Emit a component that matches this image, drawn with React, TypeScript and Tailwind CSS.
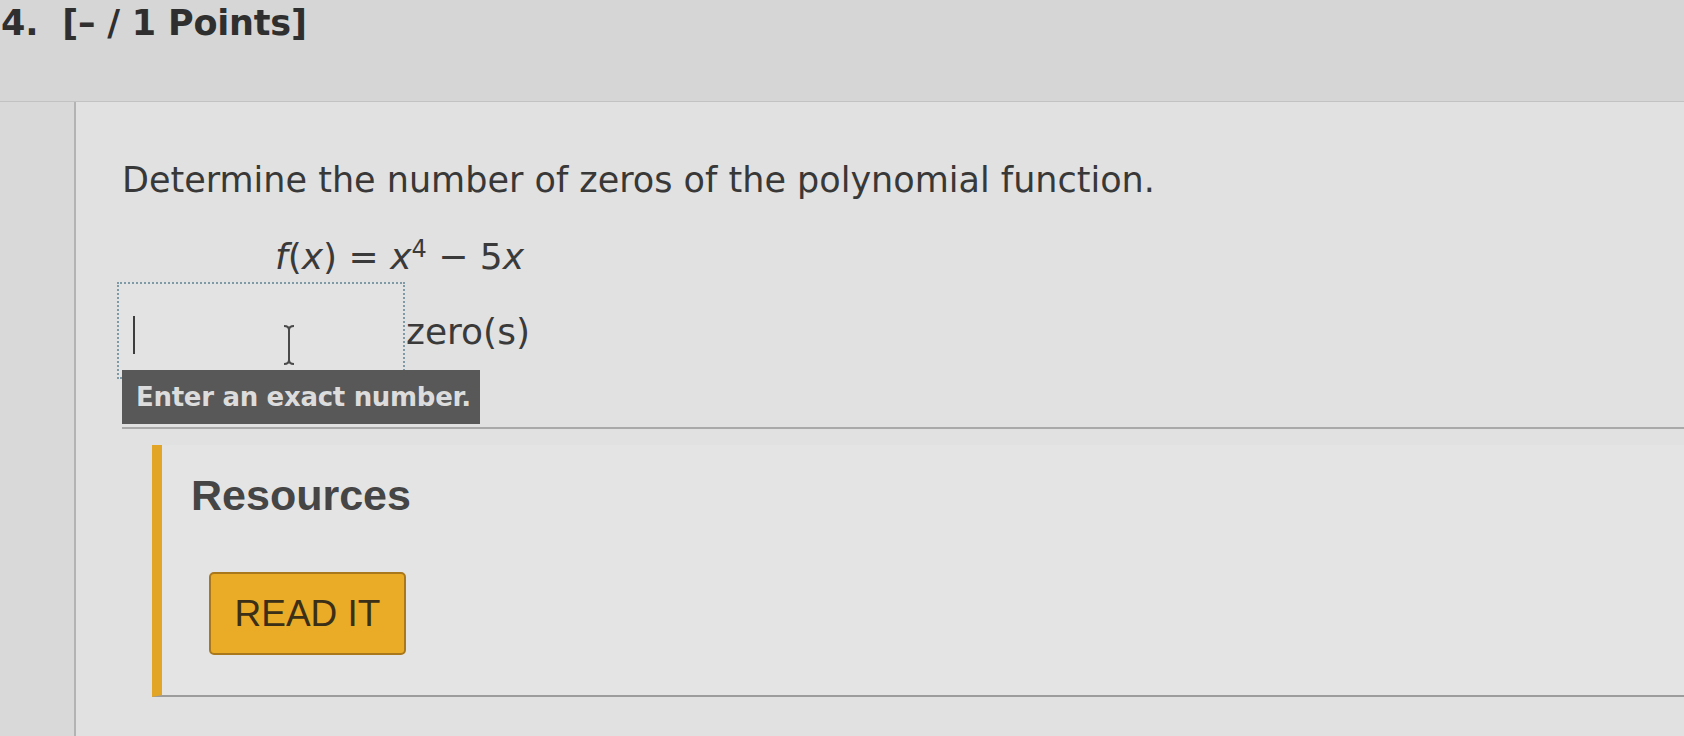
import React from 'react'

const FONT = "font-['DejaVu_Sans',Verdana,sans-serif]"

function IBeam() {
  return (
    <svg width="14" height="42" viewBox="0 0 14 42" className="absolute left-[163px] top-[40px]">
      <path d="M2 2 Q7 2 7 6 Q7 2 12 2 M7 6 V36 M2 40 Q7 40 7 36 Q7 40 12 40" fill="none" stroke="#4a4a4a" strokeWidth="2" />
    </svg>
  )
}

export default function App() {
  return (
    <div className={`w-[1684px] h-[736px] overflow-hidden bg-[#d7d7d7] ${FONT}`}>
      {/* header */}
      <div className="h-[102px] border-b border-[#c2c2c2] bg-[#d6d6d6]">
        <p className="pl-[1px] pt-[2px] text-[35px] font-bold leading-[42px] text-[#2f2f2f] tracking-[-0.2px]">
          4.&nbsp; [– / 1 Points]
        </p>
      </div>

      <div className="flex h-[634px]">
        <div className="w-[76px] border-r-2 border-[#b3b3b3] bg-[#d9d9d9]" />

        <div className="flex-1 bg-[#e1e1e1]">
          {/* question */}
          <div className="ml-[46px] border-b-2 border-[#a9a9a9] pt-[56px]">
            <p className="text-[35px] leading-[44px] text-[#383838]">
              Determine the number of zeros of the polynomial function.
            </p>

            <p className="ml-[153px] mt-[35px] text-[36px] leading-[40px] text-[#3a3a3a]">
              <span className="italic">f</span>(<span className="italic">x</span>) = <span className="italic">x</span>
              <sup className="text-[24px]">4</sup> − 5<span className="italic">x</span>
            </p>

            <div className="flex items-start mt-[5px] -ml-[5px]">
              <div className="relative w-[288px] h-[97px] border-2 border-dotted border-[#7d9aa6] bg-[#e3e3e3]">
                <div className="absolute left-[14px] top-[32px] w-[2px] h-[38px] bg-[#3d3d3d]" />
                <IBeam />
                <div className="absolute left-[3px] top-[86px] z-10 w-[358px] h-[54px] bg-[#585858] flex items-center pl-[14px]">
                  <span className="text-[26px] font-bold text-[#dcdcdc] tracking-[-0.3px]">Enter an exact number.</span>
                </div>
              </div>
              <span className="mt-[30px] ml-[1px] text-[36px] leading-[40px] text-[#3a3a3a]">zero(s)</span>
            </div>
            <div className="h-[48px]" />
          </div>

          {/* resources */}
          <div className="ml-[76px] mt-[16px] h-[252px] border-l-[10px] border-[#e3a526] border-b-2 border-b-[#9c9c9c] bg-[#e4e4e4] pl-[29px] pt-[24px]">
            <h2 className="text-[43px] font-bold leading-[52px] text-[#454545] font-['Liberation_Sans',Arial,sans-serif]">
              Resources
            </h2>
            <button className="mt-[51px] ml-[18px] w-[197px] h-[83px] rounded-[5px] border-2 border-[#a9781c] bg-[#eaab27] text-[37px] leading-none text-[#3b2f17] font-['Liberation_Sans',Arial,sans-serif]">
              READ IT
            </button>
          </div>
        </div>
      </div>
    </div>
  )
}
